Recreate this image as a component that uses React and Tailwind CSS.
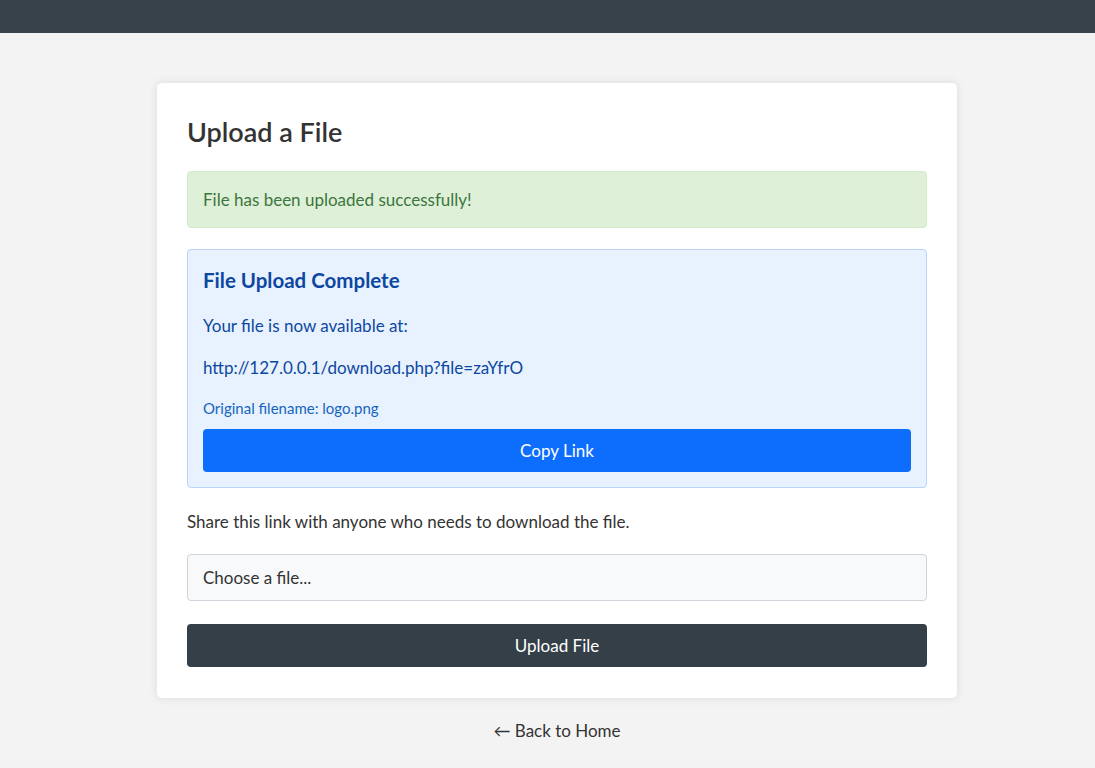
export default function App() {
  return (
    <div className="min-h-screen bg-[#f3f3f3] font-['Lato','Noto_Sans',sans-serif] text-[#333]">
      <div className="h-[33px] bg-[#37424b]" />

      <div className="ml-[157px] w-[800px] pt-[50px]">
        <div className="rounded-[5px] bg-white px-[30px] pt-[33px] pb-[31px] shadow-[0_0_10px_rgba(0,0,0,0.1)]">
          <h1 className="text-[27px] leading-[32px] font-semibold text-[#333]">Upload a File</h1>

          <div className="mt-[23px] rounded-[4px] border border-[#d3e9c8] bg-[#dff0d8] px-[15px] py-[17px] text-[17px] leading-[21px] text-[#3c763d]">
            File has been uploaded successfully!
          </div>

          <div className="mt-[21px] rounded-[4px] border border-[#b8d4f8] bg-[#e7f2fe] px-[15px] pt-[18px] pb-[15px] text-[#0d47a1]">
            <h2 className="text-[20.5px] leading-[24px] font-bold">File Upload Complete</h2>
            <p className="mt-[24px] text-[17px] leading-[20px]">Your file is now available at:</p>
            <p className="mt-[22px] text-[17px] leading-[20px]">http://127.0.0.1/download.php?file=zaYfrO</p>
            <p className="mt-[21px] text-[15px] leading-[18px] text-[#1565c0]">Original filename: logo.png</p>
            <button
              type="button"
              className="mt-[12px] h-[43px] w-full rounded-[4px] bg-[#0d6efd] text-[17px] text-white"
            >
              Copy Link
            </button>
          </div>

          <p className="mt-[24px] text-[17px] leading-[20px] text-[#333]">
            Share this link with anyone who needs to download the file.
          </p>

          <div className="mt-[22px] flex h-[47px] items-center rounded-[4px] border border-[#ced4da] bg-[#f8f9fa] px-[15px] text-[17px] text-[#333]">
            Choose a file...
          </div>

          <button
            type="button"
            className="mt-[23px] h-[43px] w-full rounded-[4px] bg-[#343f48] text-[17px] text-white"
          >
            Upload File
          </button>
        </div>

        <div className="mt-[23px] text-center text-[17px] leading-[20px] text-[#333]">
          <a href="#">← Back to Home</a>
        </div>
      </div>
    </div>
  )
}
